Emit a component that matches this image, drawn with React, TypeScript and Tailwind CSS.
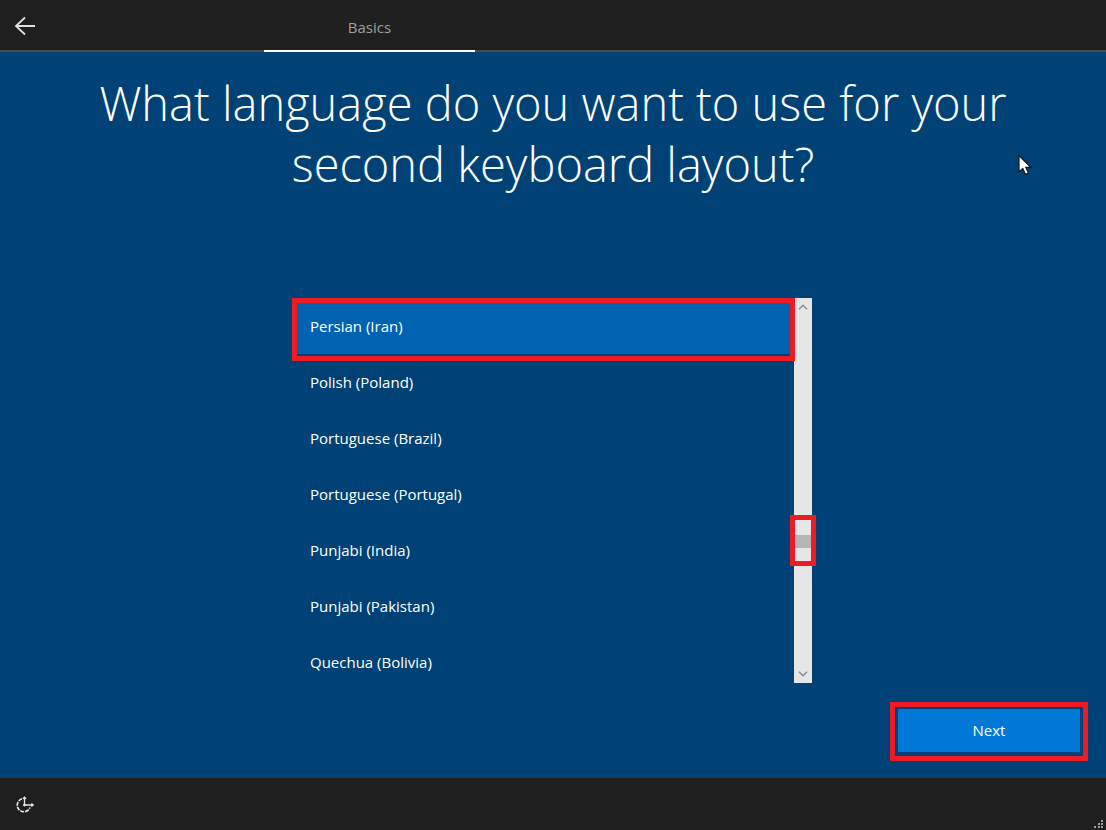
import { useState } from "react";

const LAYOUTS = [
  "Persian (Iran)",
  "Polish (Poland)",
  "Portuguese (Brazil)",
  "Portuguese (Portugal)",
  "Punjabi (India)",
  "Punjabi (Pakistan)",
  "Quechua (Bolivia)",
];

function BackIcon() {
  return (
    <svg width="22" height="20" viewBox="0 0 22 20" fill="none" stroke="#e0e0e0" strokeWidth="1.8" aria-hidden="true">
      <path d="M21 10H2M11 1.5L2 10l9 8.5" />
    </svg>
  );
}

function EaseOfAccessIcon() {
  return (
    <svg width="20" height="18" viewBox="0 0 20 18" fill="none" stroke="#e6e6e6" aria-hidden="true">
      <path d="M7 2.8A6.6 6.6 0 1 0 15 11.5" strokeWidth="1.6" strokeDasharray="4 1" />
      <path d="M9.5 1v8H18M8 2.8l1.5-1.6L11 2.8M16.4 7.4L18.2 9l-1.8 1.6" strokeWidth="1.3" />
      <circle cx="9.5" cy="9" r="1" fill="#e6e6e6" />
    </svg>
  );
}

function Chevron({ down }: { down?: boolean }) {
  return (
    <svg width="10" height="6" viewBox="0 0 10 6" fill="none" stroke="#8a8a8a" strokeWidth="1.4" aria-hidden="true">
      <path d={down ? "M1 .8l4 4 4-4" : "M1 5.2l4-4 4 4"} />
    </svg>
  );
}

function Pointer() {
  return (
    <svg width="14" height="22" viewBox="0 0 14 22" className="absolute right-[74px] top-[102px]" aria-hidden="true">
      <path d="M1 1.5v16.5l3.8-3.4 2.7 5.8 3-1.3-2.7-5.7h5z" fill="#fff" stroke="#101820" strokeWidth="1.2" />
    </svg>
  );
}

function Grip() {
  return (
    <svg width="10" height="10" viewBox="0 0 10 10" fill="#a0a0a0" className="mr-0.5 self-end" aria-hidden="true">
      <path d="M7 0h2v2H7zM4 3h2v2H4zM7 3h2v2H7zM0 6h2v2H0zM4 6h2v2H4zM7 6h2v2H7z" />
    </svg>
  );
}

export default function App() {
  const [selected, setSelected] = useState(LAYOUTS[0]);

  return (
    <div className="flex min-h-screen flex-col bg-[#004275] font-['Open_Sans','Noto_Sans',sans-serif] text-[15px] text-white">
      <header className="flex h-[52px] border-b-2 border-[#4a4a4a] bg-[#1f1f1f]">
        <button aria-label="Back" className="flex w-[264px] items-center pl-[14px] pt-0.5">
          <BackIcon />
        </button>
        <nav className="-mb-0.5 flex">
          <a href="#basics" className="flex w-[211px] items-center justify-center border-b-2 border-white pt-1 text-[#a0a0a0]">
            Basics
          </a>
        </nav>
      </header>

      <main className="relative flex flex-1 flex-col">
        <h1 className="mx-auto mt-[21px] max-w-[960px] text-center text-[47px] font-[320] leading-[61px]">
          What language do you want to use for your second keyboard layout?
        </h1>
        <Pointer />

        <div className="mx-auto mt-[103px] flex h-[385px] w-full max-w-[518px]">
          <div className="relative min-w-0 flex-1">
            <ul role="listbox" aria-label="Keyboard layout" className="h-full overflow-hidden">
              {LAYOUTS.map((name) => (
                <li key={name} role="option" aria-selected={name === selected}>
                  <button
                    onClick={() => setSelected(name)}
                    className={`h-14 w-full px-4 text-left ${name === selected ? "bg-[#0063b1]" : ""}`}
                  >
                    {name}
                  </button>
                </li>
              ))}
            </ul>
            {/* Callout round the first option */}
            <div className="pointer-events-none absolute -left-0.5 -right-px top-0 z-10 h-[63px] border-5 border-[#ed1c24]" />
          </div>

          <div className="flex w-[18px] flex-col bg-[#e6e6e6]">
            <button aria-label="Scroll up" className="flex h-[18px] items-center justify-center">
              <Chevron />
            </button>
            <div className="flex-1 pt-[219px]">
              <div className="relative h-[13px] bg-[#b5b5b5]">
                <div className="pointer-events-none absolute -inset-x-1 -bottom-[18px] -top-5 border-5 border-[#ed1c24]" />
              </div>
            </div>
            <button aria-label="Scroll down" className="flex h-[18px] items-center justify-center">
              <Chevron down />
            </button>
          </div>
        </div>

        <div className="mb-[17px] mr-[18px] mt-auto self-end border-5 border-[#ed1c24] px-[3px] pb-1 pt-0.5">
          <button className="flex h-[43px] w-[182px] items-center justify-center bg-[#0078d7]">Next</button>
        </div>
      </main>

      <footer className="flex h-[52px] items-center justify-between bg-[#1f1f1f]">
        <button aria-label="Ease of access" className="pl-[15px] pt-0.5">
          <EaseOfAccessIcon />
        </button>
        <Grip />
      </footer>
    </div>
  );
}
